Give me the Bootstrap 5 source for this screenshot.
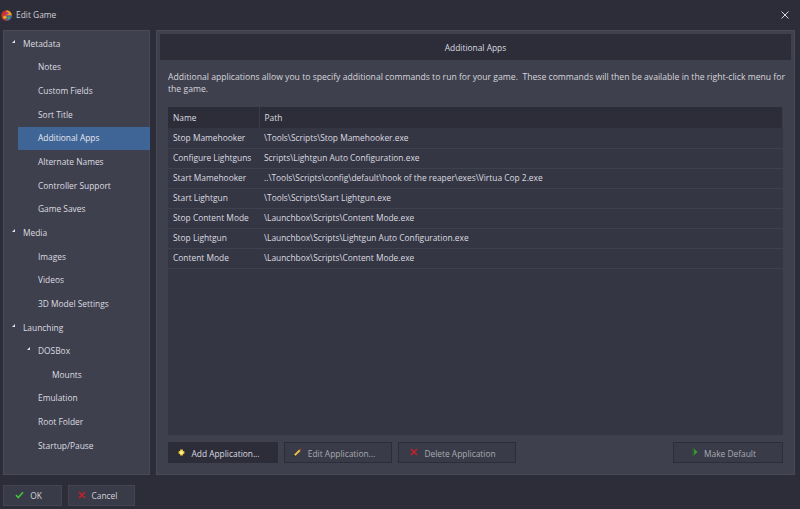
<!DOCTYPE html>
<html lang="en"><head><meta charset="utf-8"><title>Edit Game</title>
<link href="https://cdn.jsdelivr.net/npm/bootstrap@5.3.0/dist/css/bootstrap.min.css" rel="stylesheet">
<style>
html,body{height:509px;overflow:hidden}
body{background:#2c2d38;color:#dcdce0;font-family:"Open Sans","Noto Sans",sans-serif;font-size:8.4px;line-height:12px}
.app-shell{height:509px}
.title-bar{height:30px;padding:0 11px 0 1px;gap:4px}
.title-bar .ttl{font-size:8.4px;color:#d0d0d6}
.work{height:445px;padding:0 5px 0 3px;gap:6px}
.side{width:147px;flex:none;background:#3f404d;border:1px solid #494a58;padding-top:1px}
.tree-row{height:23.65px;display:flex;align-items:center;color:#dcdce0}
.tree-row.on{background:#3f6496;margin:0 -1px 0 14px;color:#e8e8ee}
.l0{padding-left:19px}.l1{padding-left:34px}.l1.on{padding-left:20px}.l2{padding-left:48px}
.tw{position:relative}
.tw::before{content:"";position:absolute;width:0;height:0;border-style:solid;border-width:0 0 3.5px 3.5px;border-color:transparent transparent #e4e4e8 transparent;margin-left:-11px;margin-top:2px}
.pane{flex:1;min-width:0;background:#3f404d;border:1px solid #494a58;padding:3px;display:flex;flex-direction:column}
.pane-head{height:26px;flex:none;background:#2c2d38;display:flex;align-items:center;justify-content:center;color:#dcdce0;padding-top:1px}
.pane-body{flex:1;min-height:0;padding:11px 8px 8px;display:flex;flex-direction:column}
.intro{margin:0 -6px 11px 0;color:#d6d6dc;height:25px;font-size:8.65px;white-space:nowrap}
.grid-box{flex:1;min-height:0;background:#353643;margin-bottom:7px}
.apps{--bs-table-bg:transparent;--bs-table-color:#dcdce0;color:#dcdce0;margin:0;table-layout:fixed;font-size:8.4px}
.apps th,.apps td{padding:0 0 0 5px;height:20px;vertical-align:middle;border-bottom:1px solid #40414e;font-weight:400;line-height:12px;white-space:nowrap;box-shadow:none;color:#dcdce0}
.apps th{background:#2c2d38;height:21px;border-bottom:0;border-right:1px solid #3a3b48}
.apps .cn{width:91px}
.act{height:21px;background:#3a3b48;border:1px solid #2c2d38;border-radius:0;color:#a9aab2;font-size:8.4px;line-height:12px;padding:1px 8px 0 0;display:flex;align-items:center;justify-content:center;gap:6px}
.act.hot{background:#2c2d38;color:#dcdce0}
.act:hover{background:#3a3b48;color:#a9aab2}
.act svg{margin-bottom:2px}
.w-add{width:110px}.w-edit{width:108px}.w-del{width:118px}.w-def{width:110px}
.btn-row{gap:6px}
.btn-row .act{padding-top:2px}
.btn-row .act svg{margin-bottom:3px}
.foot{height:34px;padding:10px 0 0 3px;gap:6px}
.foot .act{background:#3a3b48;border-color:#444553;color:#d4d4da;height:21px}
.w-ok{width:59px}.w-cancel{width:67px}
svg{display:block;flex:none}
</style></head><body>
<div class="app-shell d-flex flex-column">
  <div class="title-bar d-flex align-items-center">
    <svg width="11" height="11" viewBox="0 0 10 10"><circle cx="5" cy="5" r="4.800" fill="#c8352c"/><path d="M5 .2A4.800 4.800 0 0 1 9.800 5H5z" fill="#e8a020"/><path d="M5 5h4.800A4.800 4.800 0 0 1 5 9.800z" fill="#2f6fc0"/><circle cx="3.500" cy="6.500" r="1.500" fill="#d9b520"/><circle cx="5.500" cy="3" r="1.200" fill="#b03a9a"/><circle cx="7" cy="7" r="1.100" fill="#5aa83a"/></svg>
    <span class="ttl">Edit Game</span>
    <svg class="ms-auto" width="8" height="8" viewBox="0 0 8 8"><path d="M.5.5l7 7M7.500.5l-7 7" stroke="#d8d8dc" stroke-width="1"/></svg>
  </div>
  <div class="work d-flex">
    <div class="side">
      <div class="tree-row l0"><span class="tw">Metadata</span></div>
      <div class="tree-row l1">Notes</div>
      <div class="tree-row l1">Custom Fields</div>
      <div class="tree-row l1">Sort Title</div>
      <div class="tree-row l1 on">Additional Apps</div>
      <div class="tree-row l1">Alternate Names</div>
      <div class="tree-row l1">Controller Support</div>
      <div class="tree-row l1">Game Saves</div>
      <div class="tree-row l0"><span class="tw">Media</span></div>
      <div class="tree-row l1">Images</div>
      <div class="tree-row l1">Videos</div>
      <div class="tree-row l1">3D Model Settings</div>
      <div class="tree-row l0"><span class="tw">Launching</span></div>
      <div class="tree-row l1"><span class="tw">DOSBox</span></div>
      <div class="tree-row l2">Mounts</div>
      <div class="tree-row l1">Emulation</div>
      <div class="tree-row l1">Root Folder</div>
      <div class="tree-row l1">Startup/Pause</div>
    </div>
    <div class="pane">
      <div class="pane-head">Additional Apps</div>
      <div class="pane-body">
        <p class="intro">Additional applications allow you to specify additional commands to run for your game.&nbsp; These commands will then be available in the right-click menu for<br>the game.</p>
        <div class="grid-box">
          <table class="table apps">
            <thead><tr><th class="cn">Name</th><th>Path</th></tr></thead>
            <tbody>
              <tr><td>Stop Mamehooker</td><td>\Tools\Scripts\Stop Mamehooker.exe</td></tr>
              <tr><td>Configure Lightguns</td><td>Scripts\Lightgun Auto Configuration.exe</td></tr>
              <tr><td>Start Mamehooker</td><td>..\Tools\Scripts\config\default\hook of the reaper\exes\Virtua Cop 2.exe</td></tr>
              <tr><td>Start Lightgun</td><td>\Tools\Scripts\Start Lightgun.exe</td></tr>
              <tr><td>Stop Content Mode</td><td>\Launchbox\Scripts\Content Mode.exe</td></tr>
              <tr><td>Stop Lightgun</td><td>\Launchbox\Scripts\Lightgun Auto Configuration.exe</td></tr>
              <tr><td>Content Mode</td><td>\Launchbox\Scripts\Content Mode.exe</td></tr>
            </tbody>
          </table>
        </div>
        <div class="d-flex btn-row">
          <button type="button" class="btn act hot w-add"><svg width="7" height="7" viewBox="0 0 7 7"><path d="M2.200.6h2.600l.3 1.300 1.300.3v2.600l-1.300.3-.3 1.300H2.200l-.3-1.300L.6 4.800V2.200l1.300-.3z" fill="#e8c838"/><circle cx="3.500" cy="3.500" r="1.500" fill="#fff6a0"/></svg>Add Application...</button>
          <button type="button" class="btn act w-edit"><svg width="9" height="9" viewBox="0 0 9 9"><path d="M1.600 7.400L6.800 2.200" stroke="#e6c040" stroke-width="2"/><path d="M6.500 1.500l1-1 1 1-1 1z" fill="#c03040"/><path d="M.3 8.700l.6-2 1.400 1.400z" fill="#1c1c20"/></svg>Edit Application...</button>
          <button type="button" class="btn act w-del"><svg width="8" height="8" viewBox="0 0 8 8"><path d="M1 1l6 6M7 1L1 7" stroke="#c8202a" stroke-width="1.500"/></svg>Delete Application</button>
          <button type="button" class="btn act w-def ms-auto"><svg width="6" height="10" viewBox="0 0 6 10"><path d="M.8.500L5.500 5 .8 9.500z" fill="#3f9a3c"/><path d="M.8.500v9l1.400-1.500v-6z" fill="#24592a"/></svg>Make Default</button>
        </div>
      </div>
    </div>
  </div>
  <div class="foot d-flex align-items-start">
    <button type="button" class="btn act w-ok"><svg width="9" height="8" viewBox="0 0 9 8"><path d="M1 4.200l2.300 2.300L8 1.200" fill="none" stroke="#3fc03c" stroke-width="1.700"/></svg>OK</button>
    <button type="button" class="btn act w-cancel"><svg width="8" height="8" viewBox="0 0 8 8"><path d="M1 1l6 6M7 1L1 7" stroke="#c8202a" stroke-width="1.500"/></svg>Cancel</button>
  </div>
</div>
<script src="https://cdn.jsdelivr.net/npm/bootstrap@5.3.0/dist/js/bootstrap.bundle.min.js"></script>
</body></html>
